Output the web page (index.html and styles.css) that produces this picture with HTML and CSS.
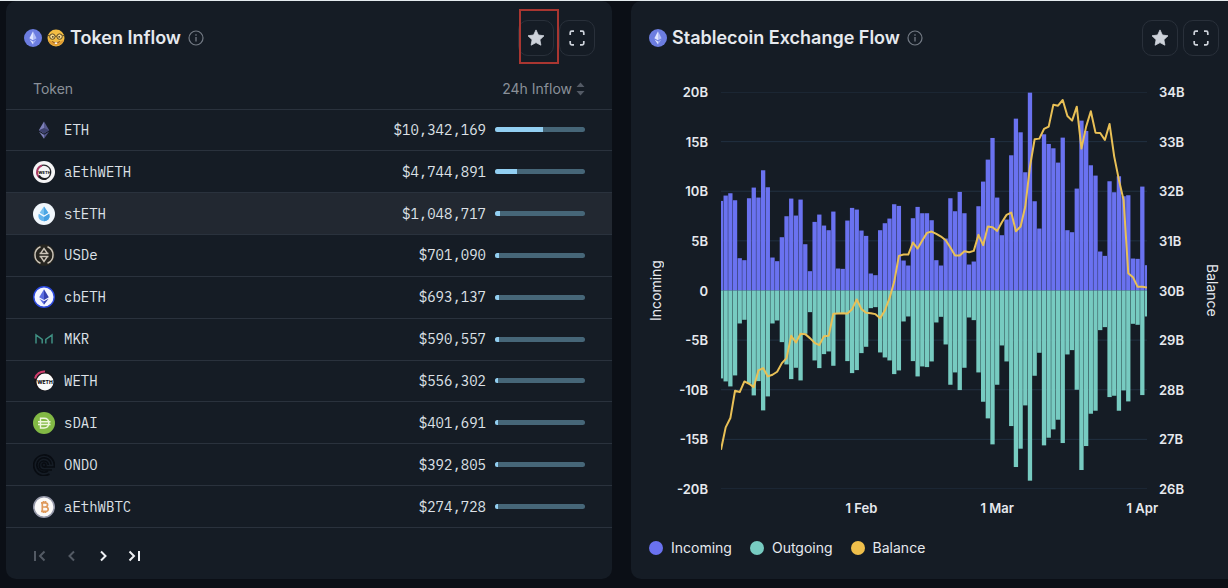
FILE: index.html
```html
<!DOCTYPE html>
<html lang="en">
<head>
<meta charset="utf-8">
<meta name="viewport" content="width=device-width, initial-scale=1">
<title>Token dashboard</title>
<link rel="stylesheet" href="styles.css">
</head>
<body>
<svg class="defs" aria-hidden="true">
  <symbol id="eth-badge" viewBox="0 0 18 18">
    <circle cx="9" cy="9" r="9" fill="#6c7de0"/>
    <path d="M9 2.2 5.4 9.2 9 11.3Z" fill="#dfe5ff"/><path d="M9 2.2 12.6 9.2 9 11.3Z" fill="#b3bef7"/>
    <path d="M5.6 10.4 9 15.6V12.4Z" fill="#dfe5ff"/><path d="M12.4 10.4 9 15.6V12.4Z" fill="#a5b1f2"/>
  </symbol>
  <symbol id="info" viewBox="0 0 16 16">
    <circle cx="8" cy="8" r="7" fill="none" stroke="#737a84" stroke-width="1.2"/>
    <path d="M8 7v4.5M8 4.3v1.4" stroke="#737a84" stroke-width="1.3"/>
  </symbol>
  <symbol id="star" viewBox="0 0 18 18">
    <path d="M9 .9l2.4 5.1 5.6.8-4.1 3.9 1 5.5L9 13.6l-4.900 2.600 1-5.500L1 6.800l5.600-.8z" fill="#cdd2da" stroke="#cdd2da" stroke-width=".8" stroke-linejoin="round"/>
  </symbol>
  <symbol id="expand" viewBox="0 0 18 18">
    <path d="M2.200 6V3.700Q2.200 2.200 3.700 2.200H6M12 2.200h2.300q1.500 0 1.500 1.500V6M15.800 12v2.300q0 1.500-1.500 1.500H12M6 15.800H3.700q-1.500 0-1.500-1.500V12" fill="none" stroke="#cdd2da" stroke-width="1.700"/>
  </symbol>
</svg>
<main class="dashboard">
  <section class="panel" aria-labelledby="inflow-title">
    <header class="panel-head">
      <svg class="badge" aria-hidden="true"><use href="#eth-badge"/></svg>
      <svg class="badge emoji" viewBox="0 0 18 18" aria-hidden="true">
        <circle cx="9" cy="9" r="8.500" fill="#f3bd43"/>
        <path d="M1 11a8.500 8.500 0 0 0 16 0Q9 15 1 11" fill="#df9a33"/>
        <g fill="#f6d98c" stroke="#5a4722" stroke-width="1"><circle cx="5.400" cy="7.600" r="2.700"/><circle cx="12.600" cy="7.600" r="2.700"/></g>
        <path d="M.6 6.600H2.600M8.200 7.200h1.600M15.400 6.600h2" stroke="#5a4722" stroke-width="1"/>
        <circle cx="5.800" cy="7.800" r=".9" fill="#493a20"/><circle cx="12.200" cy="7.800" r=".9" fill="#493a20"/>
        <path d="M5.200 12.400Q9 15.600 12.800 12.400" fill="none" stroke="#8a561f" stroke-width="1"/>
        <path d="M7.800 13.400h2.400v1.500H7.800z" fill="#fff"/>
      </svg>
      <h2 id="inflow-title">Token Inflow</h2>
      <svg class="info" role="img" aria-label="About this table"><use href="#info"/></svg>
      <div class="actions">
        <button class="icon-btn" type="button" aria-label="Add Token Inflow to favourites"><svg aria-hidden="true"><use href="#star"/></svg><span class="highlight"></span></button>
        <button class="icon-btn" type="button" aria-label="Expand Token Inflow"><svg aria-hidden="true"><use href="#expand"/></svg></button>
      </div>
    </header>
    <table class="tokens">
      <thead><tr>
        <th scope="col">Token</th>
        <th scope="col" class="num"><button class="sort" type="button">24h Inflow
          <svg viewBox="0 0 9 14" aria-hidden="true"><path d="M4.500.5 8.500 5h-8zM4.500 13.500l4-4.500h-8z" fill="#535a65"/></svg></button></th>
      </tr></thead>
      <tbody>
        <tr><td><div class="token"><svg viewBox="0 0 22 22" aria-hidden="true"><path d="M11 2.500 5.800 11.300 11 14.400Z" fill="#7d80b8"/><path d="M11 2.500 16.200 11.300 11 14.400Z" fill="#56598d"/><path d="M5.800 11.300 11 9l5.200 2.300L11 14.400Z" fill="#3d416d"/><path d="M6 12.800 11 19.800V15.800Z" fill="#7d80b8"/><path d="M16 12.800 11 19.800V15.800Z" fill="#52558a"/></svg>ETH</div></td>
          <td><div class="amount">$10,342,169<span class="meter"><span style="width:53%"></span></span></div></td></tr>
        <tr><td><div class="token"><svg viewBox="0 0 22 22" aria-hidden="true"><circle cx="11" cy="11" r="11" fill="#f5f5f6"/><path d="M6.500 16.500A7 7 0 0 1 9 4.500" fill="none" stroke="#a83a66" stroke-width="2"/><path d="M9 4.300a7 7 0 1 1-3 12" fill="none" stroke="#27272b" stroke-width="1.300"/><path d="M6 14.500Q8 18.500 13.500 17.800" fill="none" stroke="#1b1b1e" stroke-width="2"/><text class="coin-word" x="11.500" y="12.500" font-size="4">WETH</text></svg>aEthWETH</div></td>
          <td><div class="amount">$4,744,891<span class="meter"><span style="width:24%"></span></span></div></td></tr>
        <tr class="active"><td><div class="token"><svg viewBox="0 0 22 22" aria-hidden="true"><circle cx="11" cy="11" r="11" fill="#f1f7fc"/><path d="M11 3.500 6.700 9.800 11 12.300l4.300-2.500Z" fill="#77c0ee"/><path d="M11 3.500V12.300l4.300-2.500Z" fill="#4ba6e4"/><path d="M5.800 10.800 11 13.900l5.200-3.100q1.200 3.300-.9 5.700Q13.500 18.300 11 18.300T6.700 16.500Q4.600 14.100 5.800 10.800Z" fill="#64b4ec"/><path d="M11 13.900l5.200-3.100q1.200 3.300-.9 5.700Q13.500 18.300 11 18.300Z" fill="#459fe0"/></svg>stETH</div></td>
          <td><div class="amount">$1,048,717<span class="meter"><span style="width:5%"></span></span></div></td></tr>
        <tr><td><div class="token"><svg viewBox="0 0 22 22" aria-hidden="true"><circle cx="11" cy="11" r="10.800" fill="#25241f"/><g fill="none" stroke="#cbc4b8" stroke-width="1.500"><path d="M7.500 2.700A9 9 0 0 0 7.500 19.300M14.500 2.700A9 9 0 0 1 14.500 19.300"/><path d="M6.500 9.600h9M6.500 12.400h9M7.800 9.200 11 4.500l3.200 4.700M7.800 12.800 11 17.500l3.200-4.700"/></g></svg>USDe</div></td>
          <td><div class="amount">$701,090<span class="meter"><span style="width:4%"></span></span></div></td></tr>
        <tr><td><div class="token"><svg viewBox="0 0 22 22" aria-hidden="true"><circle cx="11" cy="11" r="10.200" fill="#f4f5ff" stroke="#2c49e0" stroke-width="1.400"/><path d="M11 3.200 6.200 11.200 11 14Z" fill="#5a6be0"/><path d="M11 3.200 15.800 11.200 11 14Z" fill="#3440b0"/><path d="M6.400 12.700 11 18.800V15.300Z" fill="#5a6be0"/><path d="M15.600 12.700 11 18.800V15.300Z" fill="#3440b0"/></svg>cbETH</div></td>
          <td><div class="amount">$693,137<span class="meter"><span style="width:4%"></span></span></div></td></tr>
        <tr><td><div class="token"><svg viewBox="0 0 22 22" aria-hidden="true"><path d="M3 15.500V7l6.200 4.500v4M12.800 15.500v-4L19 7v8.500" fill="none" stroke="#3f8f82" stroke-width="1.500"/></svg>MKR</div></td>
          <td><div class="amount">$590,557<span class="meter"><span style="width:4%"></span></span></div></td></tr>
        <tr><td><div class="token"><svg viewBox="0 0 22 22" aria-hidden="true"><circle cx="11" cy="11" r="10" fill="#17151a"/><path d="M2 8.500A9.500 9.500 0 0 1 12 1.500" fill="none" stroke="#d03d6d" stroke-width="2"/><circle cx="12" cy="12" r="8.500" fill="#fafafa"/><text class="coin-word" x="12" y="13.800" font-size="5">WETH</text></svg>WETH</div></td>
          <td><div class="amount">$556,302<span class="meter"><span style="width:3%"></span></span></div></td></tr>
        <tr><td><div class="token"><svg viewBox="0 0 22 22" aria-hidden="true"><circle cx="11" cy="11" r="11" fill="#82b945"/><path d="M7.500 6.200H11q4.800 0 4.800 4.900T11 16H7.500ZM5 9.700h12.500M5 12.500h12.500" fill="none" stroke="#eef6dc" stroke-width="1.400"/></svg>sDAI</div></td>
          <td><div class="amount">$401,691<span class="meter"><span style="width:3%"></span></span></div></td></tr>
        <tr><td><div class="token"><svg viewBox="0 0 22 22" aria-hidden="true"><g fill="none" stroke="#080c12" stroke-width="1.700"><path d="M16.500 20A10.300 10.300 0 1 1 21.200 13H11"/><path d="M15 17A7.200 7.200 0 1 1 18.200 10.500"/><path d="M19 16H11A4.500 4.500 0 1 1 15.300 11"/><circle cx="11" cy="11" r="1.800"/></g></svg>ONDO</div></td>
          <td><div class="amount">$392,805<span class="meter"><span style="width:3%"></span></span></div></td></tr>
        <tr><td><div class="token"><svg viewBox="0 0 22 22" aria-hidden="true"><circle cx="11" cy="11" r="10.200" fill="#fbfaf9" stroke="#9699aa" stroke-width="1.600"/><path d="M8 6.800h4q2.600 0 2.600 2T12.200 11H9.400h3q2.800 0 2.800 2.200t-2.800 2.100H8M9.300 6.800v8.500M10.500 5v1.800M12.500 5v1.800M10.500 15.300V17M12.500 15.300V17" fill="none" stroke="#df9a5c" stroke-width="1.700"/></svg>aEthWBTC</div></td>
          <td><div class="amount">$274,728<span class="meter"><span style="width:3%"></span></span></div></td></tr>
      </tbody>
    </table>
    <nav class="pager" aria-label="Table pages">
      <button type="button" disabled aria-label="First page"><svg viewBox="0 0 16 16"><path d="M3 3v10M12.500 3.500 8 8l4.500 4.500"/></svg></button>
      <button type="button" disabled aria-label="Previous page"><svg viewBox="0 0 16 16"><path d="M10 3.500 5.500 8l4.500 4.500"/></svg></button>
      <button type="button" aria-label="Next page"><svg viewBox="0 0 16 16"><path d="M5 3.500 9.500 8 5 12.500"/></svg></button>
      <button type="button" aria-label="Last page"><svg viewBox="0 0 16 16"><path d="M1.500 3.500 6 8l-4.500 4.500M11 3v10"/></svg></button>
    </nav>
  </section>

  <section class="panel panel-chart" aria-labelledby="flow-title">
    <header class="panel-head">
      <svg class="badge" aria-hidden="true"><use href="#eth-badge"/></svg>
      <h2 id="flow-title">Stablecoin Exchange Flow</h2>
      <svg class="info" role="img" aria-label="About this chart"><use href="#info"/></svg>
      <div class="actions">
        <button class="icon-btn" type="button" aria-label="Add Stablecoin Exchange Flow to favourites"><svg aria-hidden="true"><use href="#star"/></svg></button>
        <button class="icon-btn" type="button" aria-label="Expand Stablecoin Exchange Flow"><svg aria-hidden="true"><use href="#expand"/></svg></button>
      </div>
    </header>
    <div class="chart">
      <div class="axis-title flip">Incoming</div>
      <div class="axis left"><span>20B</span><span>15B</span><span>10B</span><span>5B</span><span>0</span><span>-5B</span><span>-10B</span><span>-15B</span><span>-20B</span></div>
      <svg class="plot" viewBox="0 0 91 1192" preserveAspectRatio="none" role="img" aria-label="Incoming, outgoing and balance by day"></svg>
      <div class="axis right"><span>34B</span><span>33B</span><span>32B</span><span>31B</span><span>30B</span><span>29B</span><span>28B</span><span>27B</span><span>26B</span></div>
      <div class="axis-title">Balance</div>
      <div class="dates"><span>1 Feb</span><span>1 Mar</span><span>1 Apr</span></div>
    </div>
    <ul class="legend"><li class="incoming">Incoming</li><li class="outgoing">Outgoing</li><li class="balance">Balance</li></ul>
  </section>
</main>
<script src="chart.js"></script>
</body>
</html>
```
FILE: styles.css
```css
* { box-sizing: border-box; }
body {
  margin: 0;
  border-top: 1px solid #e4ebee;
  background: #0b0f16;
  color: #e6e9ee;
  font-family: Inter, "Liberation Sans", sans-serif;
  font-size: 14px;
}
button { margin: 0; padding: 0; border: 0; background: none; color: inherit; font: inherit; }
.defs { position: absolute; width: 0; height: 0; }
.dashboard {
  display: grid;
  grid-template-columns: 606fr 597fr;
  gap: 19px;
  padding: 0 0 9px 6px;
}
.panel {
  display: flex;
  flex-direction: column;
  padding-top: 19px;
  border-radius: 10px;
  background: #151c25;
}
.panel-chart { padding: 19px 9px 21px 18px; border-radius: 10px 0 0 10px; }
.panel-head { display: flex; align-items: center; height: 36px; padding: 0 17px 0 18px; }
.panel-chart .panel-head { padding: 0; }
.badge { width: 18px; height: 18px; margin-right: 5px; }
h2 { margin: 0; font-size: 18px; font-weight: 600; line-height: 24px; }
.info { width: 16px; height: 16px; margin-left: 7px; }
.actions { display: flex; gap: 5px; margin-left: auto; }
.icon-btn {
  position: relative;
  display: grid;
  place-items: center;
  width: 36px;
  height: 36px;
  border: 1px solid #29303a;
  border-radius: 10px;
}
.icon-btn svg { width: 18px; height: 18px; }
.highlight { position: absolute; inset: -12px -6px -9px 0; border: 2px solid #a93631; }

.tokens { width: 100%; height: 472px; border-collapse: collapse; }
.tokens th {
  height: 53px;
  padding: 24px 27px 10px;
  color: #8a9099;
  font-weight: 400;
  line-height: 18px;
  text-align: left;
}
.tokens .num { text-align: right; }
.sort { display: inline-flex; align-items: center; gap: 4px; }
.sort svg { width: 9px; height: 14px; }
.tokens tr { border-bottom: 1px solid #2a323d; }
.tokens td {
  padding: 0 27px;
  font-family: "IBM Plex Mono", "Liberation Mono", monospace;
  color: #dde1e7;
}
.tokens .active { background: #222831; }
.token, .amount { display: flex; align-items: center; gap: 9px; }
.token svg { width: 22px; height: 22px; }
.amount { justify-content: flex-end; }
.meter { width: 90px; height: 5px; overflow: hidden; border-radius: 3px; background: #466678; }
.meter span { display: block; height: 100%; background: #92cff2; }
.coin-word { font-family: Inter, sans-serif; font-weight: 800; text-anchor: middle; fill: #111; }
.pager { display: flex; padding: 12px 18px 7px; }
.pager button { display: grid; place-items: center; width: 32px; height: 32px; }
.pager svg { width: 16px; height: 16px; fill: none; stroke: #eef0f4; stroke-width: 2; }
.pager button:disabled svg { stroke: #535a64; }

.chart {
  display: grid;
  grid-template-columns: 14px 58px 1fr 58px 14px;
  grid-template-rows: 413px auto;
  margin-top: 28px;
}
.axis-title { writing-mode: vertical-rl; text-align: center; line-height: 14px; }
.flip { transform: rotate(180deg); }
.axis {
  display: flex;
  flex-direction: column;
  justify-content: space-between;
  font-size: 13px;
  font-weight: 600;
  line-height: 16px;
}
.left { padding-right: 13px; text-align: right; }
.right { padding-left: 12px; }
.plot { align-self: center; width: 100%; height: 397px; }
.plot path { fill: none; vector-effect: non-scaling-stroke; }
.plot .grid { stroke: #223142; stroke-width: 1; }
.plot .bar-in { fill: #6a72f0; }
.plot .bar-out { fill: #77cbc1; }
.plot .line { stroke: #e9c056; stroke-width: 2; stroke-linejoin: round; }
.dates {
  display: grid;
  grid-column: 3;
  grid-template-columns: 30fr 29fr 31fr 1fr;
  margin-top: 3px;
  font-size: 13px;
  font-weight: 600;
  line-height: 16px;
}
.dates span { justify-self: end; transform: translateX(50%); white-space: nowrap; }
.legend { display: flex; gap: 18px; margin: 22px 0 0; padding: 0; list-style: none; line-height: 20px; }
.legend li { display: flex; align-items: center; gap: 8px; }
.legend li::before { content: ""; width: 14px; height: 14px; border-radius: 50%; background: currentColor; }
.legend .incoming::before { background: #6a72f0; }
.legend .outgoing::before { background: #77cbc1; }
.legend .balance::before { background: #efbf4b; }
```
FILE: chart.js
```js
// Plot units: 1192 tall, zero at 596; one unit is 20B / 596 on the left axis.
const ZERO = 596;
const incoming = [
  269,285,292,271,97,91,277,309,279,361,310,99,88,160,223,276,225,273,139,58,206,228,195,181,237,66,65,210,248,243,
  180,164,51,46,181,202,216,259,254,90,75,217,251,232,232,211,91,75,156,277,238,296,232,78,87,253,327,393,458,
  279,166,213,406,516,475,355,594,268,186,469,440,427,384,459,181,175,306,510,479,376,345,117,104,328,295,343,283,286,96,95,312,76];
const outgoing = [
  264,273,288,255,99,88,280,315,272,360,318,99,90,155,222,266,232,270,130,65,210,233,191,183,226,70,70,212,248,239,
  188,169,53,50,186,201,210,251,240,93,78,212,258,228,230,213,96,79,162,283,246,299,232,81,89,246,334,384,462,
  283,165,213,407,530,475,345,571,256,187,465,442,417,388,458,192,179,298,539,467,370,361,119,110,320,316,361,300,333,100,103,314,78];
// Balance, measured down from the 34B line.
const balance = [
  1074,1007,979,897,901,869,876,886,836,829,854,849,840,814,799,732,752,726,727,739,753,760,733,732,666,665,664,665,652,623,
  652,663,664,667,679,656,619,570,492,488,488,452,470,446,423,419,426,434,445,467,491,491,478,481,477,429,460,404,406,
  417,391,369,362,418,404,344,224,142,140,111,104,38,41,24,72,86,44,170,104,58,122,123,144,96,194,264,324,544,556,585,585,587];

const plot = document.querySelector(".plot");
function draw(tag, attrs) {
  const node = document.createElementNS("http://www.w3.org/2000/svg", tag);
  for (const [name, value] of Object.entries(attrs)) node.setAttribute(name, value);
  plot.append(node);
}
for (let i = 0; i <= 8; i++) draw("path", { class: "grid", d: `M0 ${i * 149}H91` });
const bar = 0.92;
incoming.forEach((h, i) => draw("rect", { class: "bar-in", x: i - bar / 2, y: ZERO - h, width: bar, height: h }));
outgoing.forEach((h, i) => draw("rect", { class: "bar-out", x: i - bar / 2, y: ZERO, width: bar, height: h }));
draw("path", { class: "line", d: "M" + balance.map((y, i) => `${i} ${y}`).join("L") });
```
